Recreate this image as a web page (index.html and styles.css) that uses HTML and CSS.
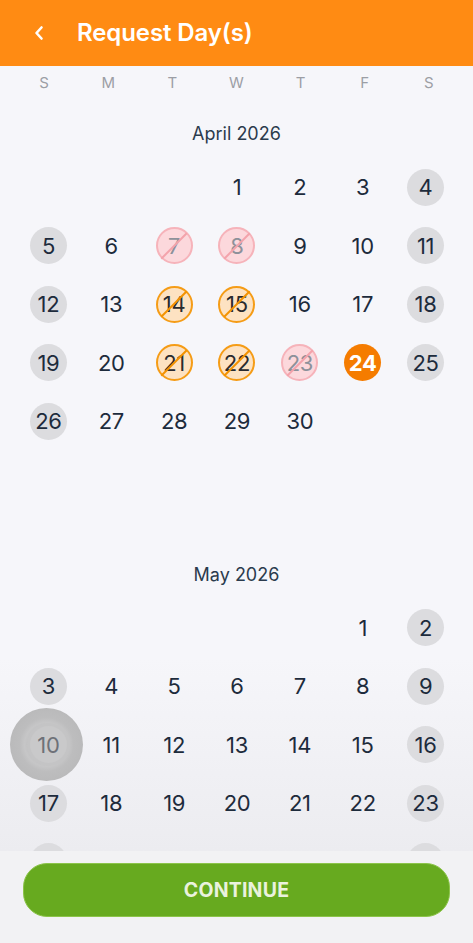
FILE: index.html
```html
<!DOCTYPE html>
<html lang="en">
<head>
    <meta charset="UTF-8">
    <meta name="viewport" content="width=device-width, initial-scale=1.0">
    <title>Request Day(s)</title>
    <link rel="stylesheet" href="styles.css">
</head>
<body>
    <div class="screen">
        <header class="topbar">
            <button class="back" aria-label="Back">
                <svg width="12" height="16" viewBox="0 0 12 16">
                    <path d="M8.5 2.5 L3.5 8 L8.5 13.5" fill="none" stroke="#fff" stroke-width="2.6" stroke-linecap="round" stroke-linejoin="round"/>
                </svg>
            </button>
            <h1>Request Day(s)</h1>
        </header>

        <div class="weekdays">
            <span>S</span><span>M</span><span>T</span><span>W</span><span>T</span><span>F</span><span>S</span>
        </div>

        <div class="calendar">
            <!-- April 2026 starts on a Wednesday -->
            <section class="month">
                <h2>April 2026</h2>
                <div class="days">
                    <div class="cell"></div><div class="cell"></div><div class="cell"></div>
                    <div class="cell"><span class="day">1</span></div>
                    <div class="cell"><span class="day">2</span></div>
                    <div class="cell"><span class="day">3</span></div>
                    <div class="cell"><span class="day weekend">4</span></div>

                    <div class="cell"><span class="day weekend">5</span></div>
                    <div class="cell"><span class="day">6</span></div>
                    <div class="cell"><span class="day blocked">7</span></div>
                    <div class="cell"><span class="day blocked">8</span></div>
                    <div class="cell"><span class="day">9</span></div>
                    <div class="cell"><span class="day">10</span></div>
                    <div class="cell"><span class="day weekend">11</span></div>

                    <div class="cell"><span class="day weekend">12</span></div>
                    <div class="cell"><span class="day">13</span></div>
                    <div class="cell"><span class="day taken">14</span></div>
                    <div class="cell"><span class="day taken">15</span></div>
                    <div class="cell"><span class="day">16</span></div>
                    <div class="cell"><span class="day">17</span></div>
                    <div class="cell"><span class="day weekend">18</span></div>

                    <div class="cell"><span class="day weekend">19</span></div>
                    <div class="cell"><span class="day">20</span></div>
                    <div class="cell"><span class="day taken">21</span></div>
                    <div class="cell"><span class="day taken">22</span></div>
                    <div class="cell"><span class="day blocked">23</span></div>
                    <div class="cell"><span class="day selected">24</span></div>
                    <div class="cell"><span class="day weekend">25</span></div>

                    <div class="cell"><span class="day weekend">26</span></div>
                    <div class="cell"><span class="day">27</span></div>
                    <div class="cell"><span class="day">28</span></div>
                    <div class="cell"><span class="day">29</span></div>
                    <div class="cell"><span class="day">30</span></div>
                </div>
            </section>

            <!-- May 2026 starts on a Friday -->
            <section class="month">
                <h2>May 2026</h2>
                <div class="days">
                    <div class="cell"></div><div class="cell"></div><div class="cell"></div>
                    <div class="cell"></div><div class="cell"></div>
                    <div class="cell"><span class="day">1</span></div>
                    <div class="cell"><span class="day weekend">2</span></div>

                    <div class="cell"><span class="day weekend">3</span></div>
                    <div class="cell"><span class="day">4</span></div>
                    <div class="cell"><span class="day">5</span></div>
                    <div class="cell"><span class="day">6</span></div>
                    <div class="cell"><span class="day">7</span></div>
                    <div class="cell"><span class="day">8</span></div>
                    <div class="cell"><span class="day weekend">9</span></div>

                    <div class="cell touched"><span class="day weekend">10</span></div>
                    <div class="cell"><span class="day">11</span></div>
                    <div class="cell"><span class="day">12</span></div>
                    <div class="cell"><span class="day">13</span></div>
                    <div class="cell"><span class="day">14</span></div>
                    <div class="cell"><span class="day">15</span></div>
                    <div class="cell"><span class="day weekend">16</span></div>

                    <div class="cell"><span class="day weekend">17</span></div>
                    <div class="cell"><span class="day">18</span></div>
                    <div class="cell"><span class="day">19</span></div>
                    <div class="cell"><span class="day">20</span></div>
                    <div class="cell"><span class="day">21</span></div>
                    <div class="cell"><span class="day">22</span></div>
                    <div class="cell"><span class="day weekend">23</span></div>

                    <div class="cell"><span class="day weekend">24</span></div>
                    <div class="cell"><span class="day">25</span></div>
                    <div class="cell"><span class="day">26</span></div>
                    <div class="cell"><span class="day">27</span></div>
                    <div class="cell"><span class="day">28</span></div>
                    <div class="cell"><span class="day">29</span></div>
                    <div class="cell"><span class="day weekend">30</span></div>
                </div>
            </section>
        </div>

        <footer class="actions">
            <button class="continue">CONTINUE</button>
        </footer>
    </div>
</body>
</html>
```

FILE: styles.css
```css
* {
    box-sizing: border-box;
}

body {
    margin: 0;
    font-family: Inter, 'Noto Sans', sans-serif;
    background-color: #f6f6fa;
    color: #1d2b3c;
}

.screen {
    height: 943px;
    display: flex;
    flex-direction: column;
    overflow: hidden;
}

/* header */
.topbar {
    height: 66px;
    flex-shrink: 0;
    background-color: #ff8b13;
    display: flex;
    align-items: center;
    padding-left: 29px;
}

.back {
    background: none;
    border: none;
    padding: 0;
    width: 20px;
    height: 20px;
    display: flex;
    align-items: center;
    justify-content: center;
    margin-right: 28px;
}

.topbar h1 {
    margin: 0;
    color: #fff;
    font-size: 24px;
    font-weight: 600;
    letter-spacing: -0.1px;
    padding-bottom: 2px;
}

/* weekday labels */
.weekdays {
    flex-shrink: 0;
    height: 32px;
    display: grid;
    grid-template-columns: repeat(7, 1fr);
    align-items: center;
    padding: 0 12px;
    font-size: 15px;
    color: #9c9ea5;
    text-align: center;
}

/* months */
.calendar {
    flex: 1;
    overflow: hidden;
    background: linear-gradient(to bottom, #f6f6fa 0, #f6f6fa 560px, #ececf0 100%);
}

.month {
    padding-top: 24px;
}

.month + .month {
    padding-top: 112px;
}

.month h2 {
    margin: 0 0 12px;
    height: 24px;
    line-height: 24px;
    text-align: center;
    font-size: 18px;
    font-weight: 400;
    color: #2b3b4d;
}

.days {
    display: grid;
    grid-template-columns: repeat(7, 1fr);
    grid-auto-rows: 58.5px;
    padding: 0 16px 0 17px;
}

.cell {
    display: flex;
    align-items: center;
    justify-content: center;
    position: relative;
}

.day {
    position: relative;
    width: 37px;
    height: 37px;
    border-radius: 50%;
    display: flex;
    align-items: center;
    justify-content: center;
    font-size: 22px;
    letter-spacing: -0.3px;
    line-height: 1;
}

.day.weekend {
    background-color: #dcdcdf;
}

.day.selected {
    background-color: #f57c00;
    color: #fff;
    font-weight: 700;
}

.day.blocked,
.day.taken {
    border: 2px solid;
}

.day.blocked {
    background-color: #fcd8dc;
    border-color: #f6b3ba;
    color: #8d919a;
}

.day.taken {
    background-color: #fde2c2;
    border-color: #f59c16;
    color: #2a2a2e;
}

/* diagonal strike through unavailable days */
.day.blocked::after,
.day.taken::after {
    content: "";
    position: absolute;
    left: 50%;
    top: 50%;
    width: 36px;
    height: 2px;
    margin: -1px 0 0 -18px;
    transform: rotate(-45deg);
}

.day.blocked::after {
    background-color: #f3a3ab;
}

.day.taken::after {
    background-color: #f39200;
}

/* touch indicator from the screen recording */
.cell.touched::before {
    content: "";
    position: absolute;
    left: 50%;
    top: 50%;
    width: 73px;
    height: 73px;
    margin: -36.5px 0 0 -38px;
    border-radius: 50%;
    background: radial-gradient(circle, #cfcfd0 0, #cacacb 16px, #c2c2c3 19px, #c6c6c7 22px, #bdbdbe 27px, #bababb 36px);
}

.cell.touched .day {
    background: #c9c9ca;
    color: #6e7178;
    box-shadow: 0 0 0 3px #c4c4c5;
}

/* bottom action */
.actions {
    flex-shrink: 0;
    height: 92px;
    background-color: #f2f2f4;
    padding: 12px 23px 0;
    position: relative;
    z-index: 1;
}

.continue {
    width: 100%;
    height: 54px;
    border: 1px solid #8cc44a;
    border-radius: 24px;
    background-color: #67aa1f;
    color: #eaf2dd;
    font-family: Inter, 'Noto Sans', sans-serif;
    font-size: 19.5px;
    font-weight: 700;
    letter-spacing: 0.2px;
    cursor: pointer;
}
```
